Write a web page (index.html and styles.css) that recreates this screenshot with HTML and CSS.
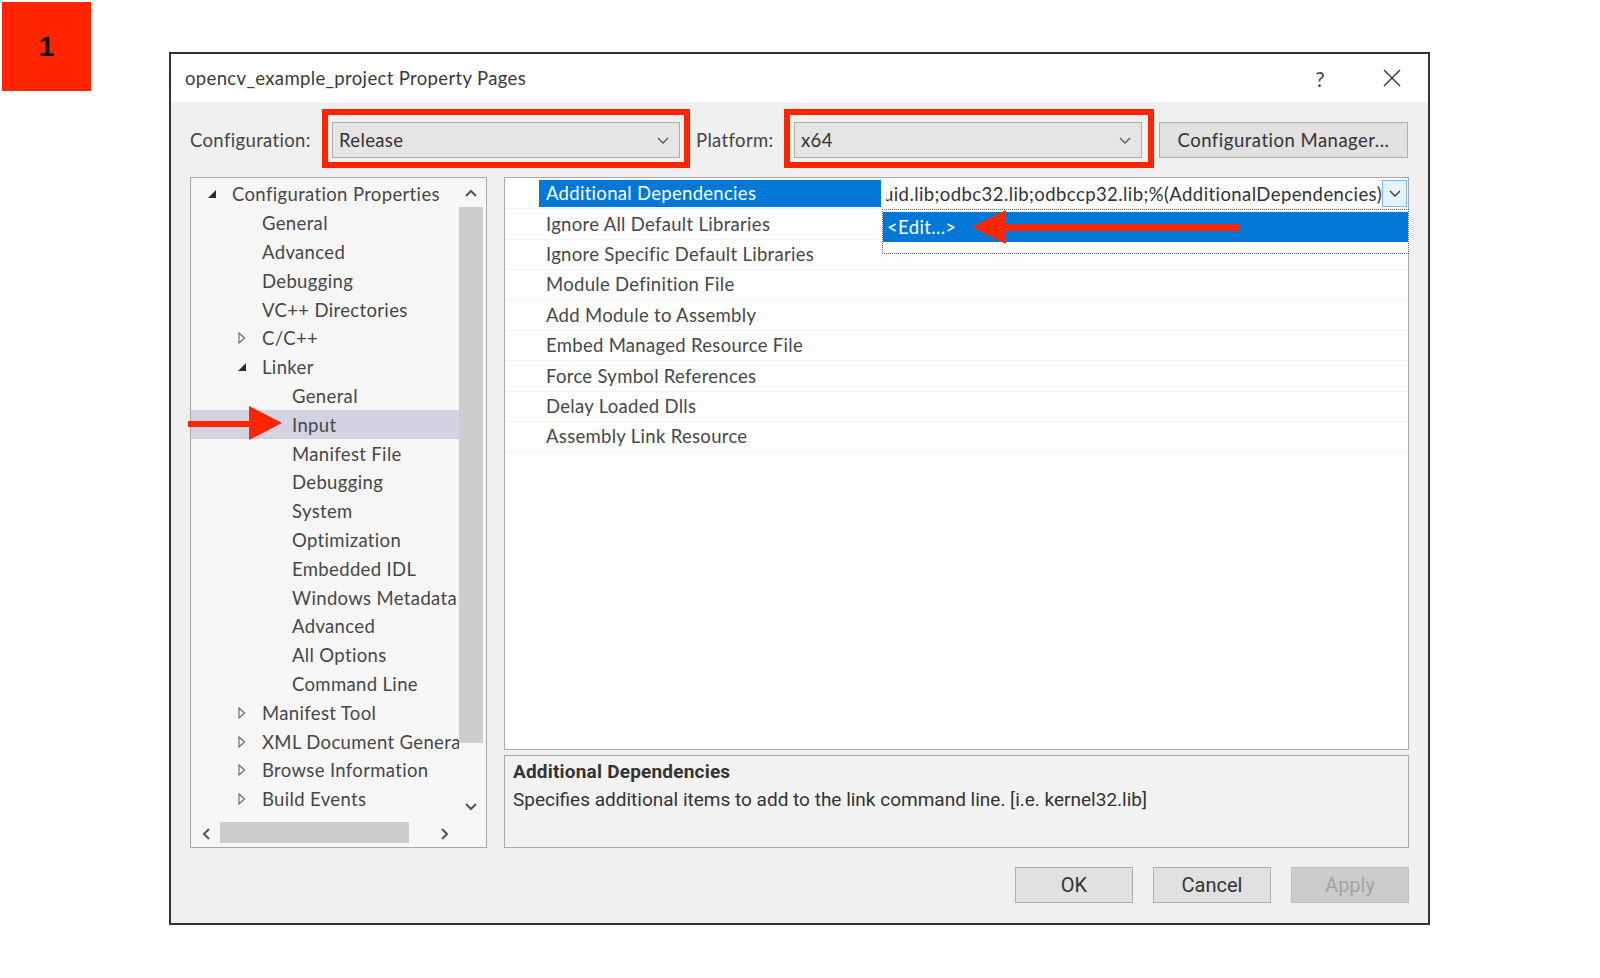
FILE: index.html
```html
<!DOCTYPE html>
<html lang="en">
<head>
    <meta charset="UTF-8">
    <title>opencv_example_project Property Pages</title>
    <link rel="stylesheet" href="styles.css">
</head>
<body>
    <!-- step badge -->
    <div class="badge">1</div>

    <div class="dialog">
        <div class="titlebar">
            <span class="title">opencv_example_project Property Pages</span>
            <div class="caption-buttons">
                <span class="cap-btn help">?</span>
                <span class="cap-btn close">
                    <svg width="18" height="18" viewBox="0 0 18 18"><path d="M1 1L17 17M17 1L1 17" stroke="#333" stroke-width="1.4" fill="none"/></svg>
                </span>
            </div>
        </div>

        <div class="dialog-body">
            <div class="config-row">
                <span class="field-label config-label">Configuration:</span>
                <div class="combo">
                    <span class="combo-text">Release</span>
                    <svg class="chevron" width="12" height="7" viewBox="0 0 12 7"><path d="M1 1L6 6L11 1" stroke="#555" stroke-width="1.3" fill="none"/></svg>
                </div>
                <span class="field-label platform-label">Platform:</span>
                <div class="combo">
                    <span class="combo-text">x64</span>
                    <svg class="chevron" width="12" height="7" viewBox="0 0 12 7"><path d="M1 1L6 6L11 1" stroke="#555" stroke-width="1.3" fill="none"/></svg>
                </div>
                <button class="btn config-manager">Configuration Manager...</button>
            </div>

            <div class="content-row">
                <div class="tree-panel">
                    <ul class="tree">
                        <li class="node l0"><span class="twisty open"></span>Configuration Properties</li>
                        <li class="node l1"><span class="twisty"></span>General</li>
                        <li class="node l1"><span class="twisty"></span>Advanced</li>
                        <li class="node l1"><span class="twisty"></span>Debugging</li>
                        <li class="node l1"><span class="twisty"></span>VC++ Directories</li>
                        <li class="node l1"><span class="twisty closed"></span>C/C++</li>
                        <li class="node l1"><span class="twisty open"></span>Linker</li>
                        <li class="node l2"><span class="twisty"></span>General</li>
                        <li class="node l2 selected"><span class="twisty"></span>Input</li>
                        <li class="node l2"><span class="twisty"></span>Manifest File</li>
                        <li class="node l2"><span class="twisty"></span>Debugging</li>
                        <li class="node l2"><span class="twisty"></span>System</li>
                        <li class="node l2"><span class="twisty"></span>Optimization</li>
                        <li class="node l2"><span class="twisty"></span>Embedded IDL</li>
                        <li class="node l2"><span class="twisty"></span>Windows Metadata</li>
                        <li class="node l2"><span class="twisty"></span>Advanced</li>
                        <li class="node l2"><span class="twisty"></span>All Options</li>
                        <li class="node l2"><span class="twisty"></span>Command Line</li>
                        <li class="node l1"><span class="twisty closed"></span>Manifest Tool</li>
                        <li class="node l1"><span class="twisty closed"></span>XML Document Genera</li>
                        <li class="node l1"><span class="twisty closed"></span>Browse Information</li>
                        <li class="node l1"><span class="twisty closed"></span>Build Events</li>
                    </ul>
                    <div class="vscroll">
                        <span class="sb-btn">
                            <svg width="12" height="8" viewBox="0 0 12 8"><path d="M1 7L6 2L11 7" stroke="#555" stroke-width="2" fill="none"/></svg>
                        </span>
                        <span class="vthumb"></span>
                        <span class="sb-btn">
                            <svg width="12" height="8" viewBox="0 0 12 8"><path d="M1 1L6 6L11 1" stroke="#555" stroke-width="2" fill="none"/></svg>
                        </span>
                    </div>
                    <div class="hscroll">
                        <span class="sb-btn">
                            <svg width="8" height="12" viewBox="0 0 8 12"><path d="M7 1L2 6L7 11" stroke="#555" stroke-width="2" fill="none"/></svg>
                        </span>
                        <span class="hthumb"></span>
                        <span class="hgap"></span>
                        <span class="sb-btn">
                            <svg width="8" height="12" viewBox="0 0 8 12"><path d="M1 1L6 6L1 11" stroke="#555" stroke-width="2" fill="none"/></svg>
                        </span>
                    </div>
                    <div class="corner"></div>
                </div>

                <div class="right-col">
                    <div class="prop-grid">
                        <div class="prop-row">
                            <span class="prop-name selected">Additional Dependencies</span>
                            <span class="prop-value editing">
                                <span class="value-clip"><span>uuid.lib;odbc32.lib;odbccp32.lib;%(AdditionalDependencies)</span></span>
                                <span class="drop-btn">
                                    <svg width="12" height="7" viewBox="0 0 12 7"><path d="M1 1L6 6L11 1" stroke="#333" stroke-width="1.3" fill="none"/></svg>
                                </span>
                            </span>
                        </div>
                        <div class="prop-row"><span class="prop-name">Ignore All Default Libraries</span><span class="prop-value"></span></div>
                        <div class="prop-row"><span class="prop-name">Ignore Specific Default Libraries</span><span class="prop-value"></span></div>
                        <div class="prop-row"><span class="prop-name">Module Definition File</span><span class="prop-value"></span></div>
                        <div class="prop-row"><span class="prop-name">Add Module to Assembly</span><span class="prop-value"></span></div>
                        <div class="prop-row"><span class="prop-name">Embed Managed Resource File</span><span class="prop-value"></span></div>
                        <div class="prop-row"><span class="prop-name">Force Symbol References</span><span class="prop-value"></span></div>
                        <div class="prop-row"><span class="prop-name">Delay Loaded Dlls</span><span class="prop-value"></span></div>
                        <div class="prop-row"><span class="prop-name">Assembly Link Resource</span><span class="prop-value"></span></div>

                        <!-- open dropdown of the edited value -->
                        <div class="drop-list">
                            <div class="drop-item">&lt;Edit...&gt;</div>
                        </div>
                    </div>
                    <div class="desc">
                        <div class="desc-title">Additional Dependencies</div>
                        <div class="desc-text">Specifies additional items to add to the link command line. [i.e. kernel32.lib]</div>
                    </div>
                </div>
            </div>

            <div class="button-row">
                <button class="btn dlg-btn">OK</button>
                <button class="btn dlg-btn">Cancel</button>
                <button class="btn dlg-btn disabled">Apply</button>
            </div>
        </div>
    </div>

    <!-- tutorial annotations -->
    <div class="mark mark-config"></div>
    <div class="mark mark-platform"></div>
    <svg class="arrows" width="1600" height="978" viewBox="0 0 1600 978">
        <rect x="188" y="421" width="64" height="6" fill="#ff2500"/>
        <polygon points="249,406 282,423 249,440" fill="#ff2500"/>
        <rect x="1000" y="224" width="240" height="7" fill="#ff2500"/>
        <polygon points="972,227 1006,210 1006,244" fill="#ff2500"/>
    </svg>
</body>
</html>
```

FILE: styles.css
```css
body {
    margin: 0;
    width: 1600px;
    height: 978px;
    background: #fff;
    font-family: Lato, "Noto Sans", sans-serif;
    letter-spacing: 0.35px;
    color: #3f3f3f;
    position: relative;
    overflow: hidden;
}

.badge {
    position: absolute;
    left: 2px;
    top: 2px;
    width: 89px;
    height: 89px;
    background: #ff2500;
    color: #111;
    font-family: "Liberation Sans", Arial, sans-serif;
    font-size: 28px;
    font-weight: bold;
    letter-spacing: 0;
    display: flex;
    align-items: center;
    justify-content: center;
}

.dialog {
    position: absolute;
    left: 169px;
    top: 52px;
    width: 1261px;
    height: 873px;
    box-sizing: border-box;
    border: 2px solid #333;
    background: #f0f0f0;
    display: flex;
    flex-direction: column;
}

.titlebar {
    height: 48px;
    background: #fff;
    display: flex;
    align-items: center;
    padding-left: 14px;
}

.title {
    flex: 1;
    font-size: 18.5px;
    color: #3a3a3a;
}

.caption-buttons {
    display: flex;
    height: 100%;
}

.cap-btn {
    width: 72px;
    display: flex;
    align-items: center;
    justify-content: center;
}

.help {
    font-size: 21px;
    color: #444;
}

.dialog-body {
    flex: 1;
    display: flex;
    flex-direction: column;
    padding: 20px 19px 20px 19px;
}

.config-row {
    display: flex;
    align-items: center;
    height: 36px;
}

.field-label {
    font-size: 18.5px;
    color: #444;
}

.config-label {
    width: 142px;
}

.platform-label {
    width: 98px;
    margin-left: 16px;
}

.combo {
    width: 348px;
    height: 36px;
    box-sizing: border-box;
    border: 1px solid #adadad;
    background: #e5e5e5;
    display: flex;
    align-items: center;
    padding: 0 10px 0 6px;
}

.combo-text {
    flex: 1;
    font-size: 18.5px;
    color: #333;
}

.btn {
    font-family: Lato, "Noto Sans", sans-serif;
    font-size: 18.5px;
    letter-spacing: 0.5px;
    color: #333;
    background: #e1e1e1;
    border: 1px solid #adadad;
    height: 36px;
    padding: 0;
}

.config-manager {
    width: 249px;
    margin-left: 17px;
}

.content-row {
    display: flex;
    gap: 17px;
    height: 671px;
    margin-top: 19px;
}

/* tree */
.tree-panel {
    width: 297px;
    box-sizing: border-box;
    border: 1px solid #a9a9a9;
    background: #f6f6f6;
    display: grid;
    grid-template-columns: 1fr 27px;
    grid-template-rows: 1fr 26px;
    overflow: hidden;
}

.tree {
    list-style: none;
    margin: 0;
    padding: 2px 0 0 0;
    overflow: hidden;
}

.node {
    height: 28.8px;
    display: flex;
    align-items: center;
    font-size: 18.5px;
    color: #474747;
    white-space: nowrap;
}

.node.l0 { padding-left: 14px; }
.node.l1 { padding-left: 44px; }
.node.l2 { padding-left: 74px; }

.node.selected {
    background: #d2d2e2;
}

.twisty {
    width: 27px;
    height: 12px;
    flex: none;
    position: relative;
}

.twisty.open::before {
    content: "";
    position: absolute;
    left: 3px;
    top: 2px;
    border-style: solid;
    border-width: 0 0 8px 8px;
    border-color: transparent transparent #2b2b2b transparent;
}

.twisty.closed::before {
    content: "";
    position: absolute;
    left: 3px;
    top: 0;
    width: 8px;
    height: 12px;
    background: url("data:image/svg+xml,%3Csvg xmlns='http://www.w3.org/2000/svg' width='8' height='12'%3E%3Cpath d='M1 1L6.5 6L1 11Z' fill='none' stroke='%23666' stroke-width='1.1'/%3E%3C/svg%3E");
}

.vscroll {
    display: flex;
    flex-direction: column;
    align-items: flex-start;
}

.vscroll .sb-btn {
    width: 24px;
    height: 29px;
    display: flex;
    align-items: center;
    justify-content: center;
}

.vthumb {
    width: 24px;
    height: 536px;
    background: #cdcdcd;
}

.vscroll .sb-btn:last-child {
    margin-top: auto;
}

.hscroll {
    display: flex;
    align-items: center;
}

.hscroll .sb-btn {
    width: 29px;
    height: 26px;
    display: flex;
    align-items: center;
    justify-content: center;
}

.hthumb {
    width: 189px;
    height: 21px;
    margin-top: -4px;
    background: #cdcdcd;
}

.hgap {
    flex: 1;
}

/* property grid */
.right-col {
    flex: 1;
    display: flex;
    flex-direction: column;
    gap: 5px;
}

.prop-grid {
    height: 573px;
    box-sizing: border-box;
    border: 1px solid #a9a9a9;
    background: #fdfdfd;
    padding-top: 1px;
    position: relative;
}

.prop-row {
    height: 30.4px;
    display: grid;
    grid-template-columns: 34px 342px 1fr;
    align-items: center;
    box-sizing: border-box;
    border-bottom: 1px solid #f3f3f3;
}

.prop-name {
    grid-column: 2;
    height: 27px;
    line-height: 27px;
    padding-left: 7px;
    font-size: 18.5px;
    letter-spacing: 0.3px;
    color: #474747;
    white-space: nowrap;
}

.prop-name.selected {
    background: #0078d7;
    color: #fff;
}

.prop-value {
    grid-column: 3;
    height: 27px;
    display: flex;
    align-items: center;
    min-width: 0;
}

.value-clip {
    flex: 1;
    min-width: 0;
    margin-left: 5px;
    overflow: hidden;
    display: flex;
    justify-content: flex-end;
    white-space: nowrap;
    font-size: 18.5px;
    letter-spacing: 0.42px;
    color: #333;
}

.value-clip span {
    flex: none;
}

.drop-btn {
    width: 25px;
    height: 27px;
    box-sizing: border-box;
    flex: none;
    margin-right: 1px;
    border: 1px solid #7eb4ea;
    background: #e5f1fb;
    display: flex;
    align-items: center;
    justify-content: center;
}

.drop-list {
    position: absolute;
    left: 377px;
    top: 31px;
    width: 527px;
    height: 45px;
    box-sizing: border-box;
    border: 1px dotted #6a6a6a;
    background: #fff;
    padding-top: 2px;
}

.drop-item {
    height: 30px;
    line-height: 30px;
    background: #0078d7;
    color: #fff;
    font-size: 18.5px;
    padding-left: 4px;
}

.desc {
    flex: 1;
    box-sizing: border-box;
    border: 1px solid #a9a9a9;
    background: #f2f2f2;
    padding: 2px 0 0 8px;
    font-family: "Liberation Sans Narrow", Roboto, sans-serif;
    letter-spacing: 0;
    color: #333;
}

.desc-title {
    font-weight: bold;
    font-size: 19px;
    letter-spacing: 0.2px;
    height: 28px;
    line-height: 28px;
}

.desc-text {
    font-size: 19px;
    height: 28px;
    line-height: 28px;
}

.button-row {
    display: flex;
    justify-content: flex-end;
    gap: 20px;
    margin-top: 19px;
}

.dlg-btn {
    width: 118px;
    font-family: "Liberation Sans Narrow", Roboto, sans-serif;
    font-size: 20px;
    letter-spacing: 0;
}

.dlg-btn.disabled {
    background: #cccccc;
    border-color: #bfbfbf;
    color: #a3a3a3;
}

/* annotations */
.mark {
    position: absolute;
    top: 109px;
    height: 59px;
    box-sizing: border-box;
    border: 6px solid #ff2500;
}

.mark-config {
    left: 322px;
    width: 368px;
}

.mark-platform {
    left: 784px;
    width: 370px;
}

.arrows {
    position: absolute;
    left: 0;
    top: 0;
    pointer-events: none;
}
```
